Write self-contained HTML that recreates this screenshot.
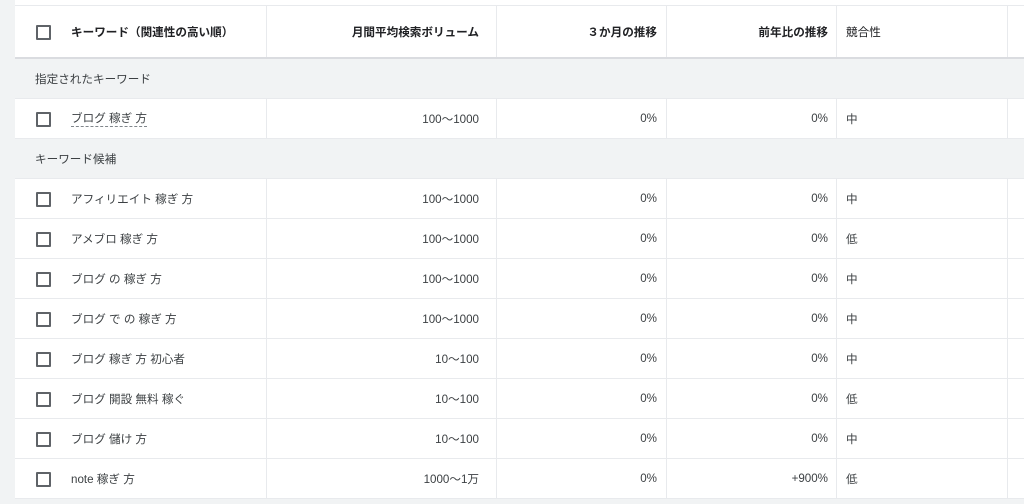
<!DOCTYPE html>
<html><head><meta charset="utf-8"><style>
*{margin:0;padding:0;box-sizing:border-box}
body{width:1024px;height:504px;overflow:hidden;background:#f1f3f4;font-family:"Liberation Sans","Noto Sans CJK JP",sans-serif;font-size:11.6px;color:#3c4043;position:relative}
.t{position:absolute;left:15px;top:0;width:1009px;background:#fff}
.r{position:relative;height:40px;border-bottom:1px solid #e8eaed}
.c{position:absolute;top:0;height:100%;display:flex;align-items:center;border-right:1px solid #e8eaed}
.c1{left:0;width:252px;padding-left:56px}
.c2{left:252px;width:230px;justify-content:flex-end;padding-right:17px}
.c3{left:482px;width:170px;justify-content:flex-end;padding-right:9px}
.c4{left:652px;width:170px;justify-content:flex-end;padding-right:8px}
.c5{left:822px;width:171px;padding-left:9px}
.c6{left:993px;width:16px;border:none}
.cb{position:absolute;left:21px;top:50%;margin-top:-7px;width:15px;height:15px;border:2px solid #5f6368;border-radius:1px}
.s{height:40px;background:#f1f3f4;padding-left:20px;display:flex;align-items:center;border-bottom:1px solid #e8eaed}
.h{height:53px;border-bottom:2px solid #dadce0}
.h .c{font-weight:bold;color:#202124}
</style></head><body>
<div class="t">
<div style="height:6px;border-bottom:1px solid #e8eaed"></div>
<div class="r h"><span class="cb"></span><div class="c c1">キーワード（関連性の高い順）</div><div class="c c2">月間平均検索ボリューム</div><div class="c c3">３か月の推移</div><div class="c c4">前年比の推移</div><div class="c c5" style="font-weight:normal">競合性</div><div class="c c6"></div></div>
<div class="s">指定されたキーワード</div>
<div class="r"><span class="cb"></span><div class="c c1"><span style="border-bottom:1px dashed #80868b">ブログ 稼ぎ 方</span></div><div class="c c2">100～1000</div><div class="c c3">0%</div><div class="c c4">0%</div><div class="c c5">中</div><div class="c c6"></div></div>
<div class="s">キーワード候補</div>
<div class="r"><span class="cb"></span><div class="c c1">アフィリエイト 稼ぎ 方</div><div class="c c2">100～1000</div><div class="c c3">0%</div><div class="c c4">0%</div><div class="c c5">中</div><div class="c c6"></div></div>
<div class="r"><span class="cb"></span><div class="c c1">アメブロ 稼ぎ 方</div><div class="c c2">100～1000</div><div class="c c3">0%</div><div class="c c4">0%</div><div class="c c5">低</div><div class="c c6"></div></div>
<div class="r"><span class="cb"></span><div class="c c1">ブログ の 稼ぎ 方</div><div class="c c2">100～1000</div><div class="c c3">0%</div><div class="c c4">0%</div><div class="c c5">中</div><div class="c c6"></div></div>
<div class="r"><span class="cb"></span><div class="c c1">ブログ で の 稼ぎ 方</div><div class="c c2">100～1000</div><div class="c c3">0%</div><div class="c c4">0%</div><div class="c c5">中</div><div class="c c6"></div></div>
<div class="r"><span class="cb"></span><div class="c c1">ブログ 稼ぎ 方 初心者</div><div class="c c2">10～100</div><div class="c c3">0%</div><div class="c c4">0%</div><div class="c c5">中</div><div class="c c6"></div></div>
<div class="r"><span class="cb"></span><div class="c c1">ブログ 開設 無料 稼ぐ</div><div class="c c2">10～100</div><div class="c c3">0%</div><div class="c c4">0%</div><div class="c c5">低</div><div class="c c6"></div></div>
<div class="r"><span class="cb"></span><div class="c c1">ブログ 儲け 方</div><div class="c c2">10～100</div><div class="c c3">0%</div><div class="c c4">0%</div><div class="c c5">中</div><div class="c c6"></div></div>
<div class="r"><span class="cb"></span><div class="c c1">note 稼ぎ 方</div><div class="c c2">1000～1万</div><div class="c c3">0%</div><div class="c c4">+900%</div><div class="c c5">低</div><div class="c c6"></div></div>
</div>
</body></html>
